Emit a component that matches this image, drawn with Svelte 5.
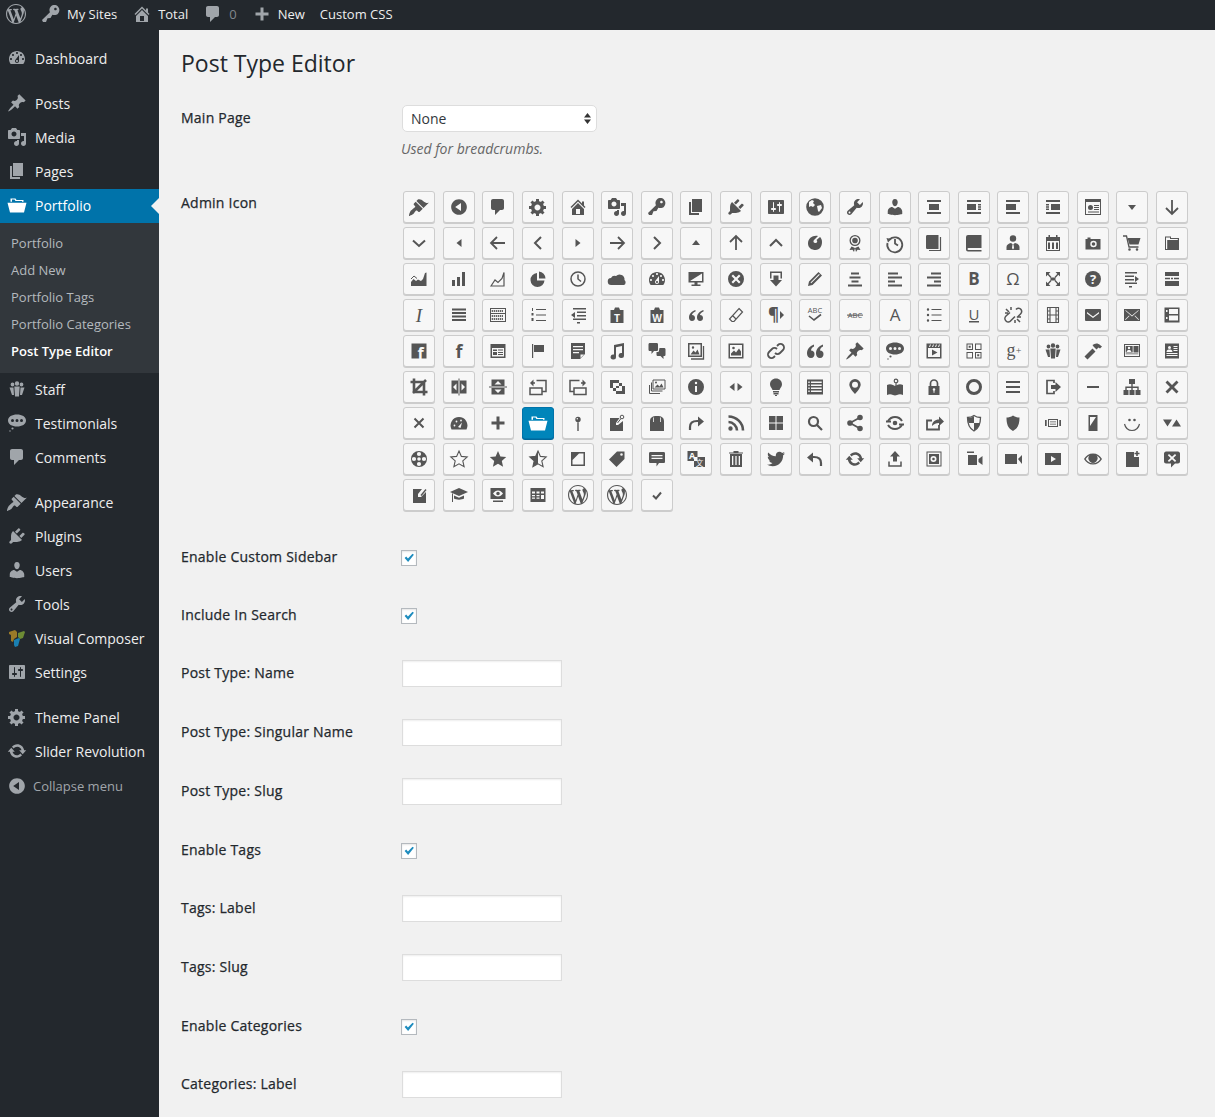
<script>
  const r = (x, y, w, h) => `M${x} ${y}h${w}v${h}h${-w}z`;
  const c = (x, y, a) => `M${x - a} ${y}a${a} ${a} 0 1 0 ${2 * a} 0a${a} ${a} 0 1 0 ${-2 * a} 0z`;
  const many = (xs, y, w, h) => xs.map((x) => r(x, y, w, h)).join("");

  const starPath = "M10 2l2.4 5.4 5.8.6-4.4 3.9 1.3 5.8L10 14.8l-5.1 2.9 1.3-5.8L1.8 8l5.8-.6z";
  const shieldPath = "M10 2.5c2 1.5 4.5 2 6.5 2 0 6-1 10.5-6.5 13.5C4.5 15 3.5 10.5 3.5 4.5c2 0 4.5-.5 6.5-2z";
  const wp = "M20 10c0-5.51-4.49-10-10-10C4.48 0 0 4.49 0 10c0 5.52 4.48 10 10 10 5.51 0 10-4.48 10-10zM7.78 15.37L4.37 6.22c.55-.02 1.17-.08 1.17-.08.5-.06.44-1.13-.06-1.11 0 0-1.45.11-2.37.11-.18 0-.37 0-.58-.01C4.12 2.69 6.87 1.11 10 1.11c2.33 0 4.45.87 6.05 2.34-.68-.11-1.65.39-1.65 1.58 0 .74.45 1.36.9 2.1.35.61.55 1.36.55 2.46 0 1.49-1.4 5-1.4 5l-3.03-8.37c.54-.02.82-.17.82-.17.5-.05.44-1.25-.06-1.22 0 0-1.44.12-2.38.12-.87 0-2.33-.12-2.33-.12-.5-.03-.56 1.2-.06 1.22l.92.08 1.26 3.41zM17.41 10c.24-.64.74-1.87.43-4.25.7 1.29 1.05 2.71 1.05 4.25 0 3.29-1.73 6.24-4.4 7.78.97-2.59 1.94-5.2 2.92-7.78zM6.1 18.09C3.12 16.65 1.11 13.53 1.11 10c0-1.3.23-2.48.72-3.59C3.25 10.3 4.67 14.2 6.1 18.09zm4.03-6.63l2.58 6.98c-.86.29-1.76.45-2.71.45-.79 0-1.57-.11-2.29-.33.81-2.38 1.62-4.74 2.42-7.1z";
  const light = "#f7f7f7";

  // f = filled (evenodd), s = stroked, w = stroke width, t = [text, x, y, size, class, fill]
  const icons = {
    brush: { f: "M14.48 11.06L7.41 3.99l1.5-1.5c.5-.56 2.3-.47 3.51.32 1.21.8 1.43 1.28 2.91 2.1 1.18.64 2.45 1.26 4.45.85zm-.71.71L6.7 4.7 4.93 6.47c-.39.39-.39 1.02 0 1.41l1.06 1.06c.39.39.39 1.03 0 1.42-.6.6-1.43 1.11-2.21 1.69-.35.26-.7.53-1.01.84C1.43 13.26 0 16.85 0 19c0 0 3.74-1.43 4.3-2.11.31-.31.58-.66.84-1.01.58-.78 1.09-1.61 1.69-2.21.39-.39 1.03-.39 1.42 0l1.06 1.06c.39.39 1.02.39 1.41 0z" },
    collapse: { f: "M10 2.16c4.33 0 7.84 3.51 7.84 7.84s-3.51 7.84-7.84 7.84S2.16 14.33 2.16 10 5.71 2.16 10 2.16zm2 11.72V6.12L6.18 9.97z" },
    comment: { f: "M5 2h9c1.1 0 2 .9 2 2v7c0 1.1-.9 2-2 2h-2l-5 5v-5H5c-1.1 0-2-.9-2-2V4c0-1.1.9-2 2-2z" },
    gear: { f: "M18 12h-2.18c-.17.7-.44 1.35-.81 1.93l1.54 1.54-2.1 2.1-1.54-1.54c-.58.36-1.23.63-1.91.79V19H8v-2.18c-.68-.16-1.33-.43-1.91-.79l-1.54 1.54-2.12-2.12 1.54-1.54c-.36-.58-.63-1.23-.79-1.91H1V9.03h2.17c.16-.7.44-1.35.8-1.94L2.43 5.55l2.1-2.1 1.54 1.54c.58-.37 1.24-.64 1.93-.81V2h3v2.18c.68.16 1.33.43 1.91.79l1.54-1.54 2.12 2.12-1.54 1.54c.36.59.64 1.24.8 1.94H18V12zm-8.5 1.5c1.66 0 3-1.34 3-3s-1.34-3-3-3-3 1.34-3 3 1.34 3 3 3z" },
    home: { f: "M16 8.5l1.53 1.53-1.06 1.06L10 4.62l-6.47 6.47-1.06-1.06L10 2.5l4 4v-2h2v4zm-6-2.46l6 5.99V18H4v-5.97zM12 17v-5H8v5h4z" },
    media: { f: "M13 11V4c0-.55-.45-1-1-1h-1.67L9 1H5L3.67 3H2c-.55 0-1 .45-1 1v7c0 .55.45 1 1 1h10c.55 0 1-.45 1-1zM7 4.5c1.38 0 2.5 1.12 2.5 2.5S8.38 9.5 7 9.5 4.5 8.38 4.5 7 5.62 4.5 7 4.5zM14 6h5v10.5c0 1.38-1.12 2.5-2.5 2.5S14 17.88 14 16.5s1.12-2.5 2.5-2.5c.17 0 .34.02.5.05V9h-3V6zm-4 8.05V13h2v3.5c0 1.38-1.12 2.5-2.5 2.5S7 17.88 7 16.5 8.12 14 9.5 14c.17 0 .34.02.5.05z" },
    key: { f: "M16.95 2.58c1.96 1.95 1.96 5.12 0 7.07-1.51 1.51-3.75 1.84-5.59 1.01l-1.87 3.31-2.99.31L5 18H2l-1-2 7.95-7.69c-.92-1.87-.62-4.18.93-5.73 1.95-1.96 5.12-1.96 7.07 0zm-2.51 3.79c.74 0 1.33-.6 1.33-1.34 0-.73-.59-1.33-1.33-1.33-.73 0-1.33.6-1.33 1.33 0 .74.6 1.34 1.33 1.34z" },
    pages: { f: "M6 15V2h10v13H6zm-1 1h8v2H3V5h2v11z" },
    plugin: { f: "M13.11 4.36L9.87 7.6 8 5.73l3.24-3.24c.35-.34 1.05-.2 1.56.32.52.51.66 1.21.31 1.55zm-8 1.77l.91-1.12 9.01 9.01-1.19.84c-.71.71-2.63 1.16-3.82 1.16H6.14L4.9 17.26c-.59.59-1.54.59-2.12 0-.59-.58-.59-1.53 0-2.12l1.24-1.24v-3.88c0-1.13.4-3.19 1.09-3.89zm7.26 3.97l3.24-3.24c.34-.35 1.04-.21 1.55.31.52.51.66 1.21.31 1.55l-3.24 3.25z" },
    settings: { f: "M18 16V4c0-.55-.45-1-1-1H3c-.55 0-1 .45-1 1v12c0 .55.45 1 1 1h14c.55 0 1-.45 1-1zM8 11h1c.55 0 1 .45 1 1s-.45 1-1 1H8v1.5c0 .28-.22.5-.5.5s-.5-.22-.5-.5V13H6c-.55 0-1-.45-1-1s.45-1 1-1h1V5.5c0-.28.22-.5.5-.5s.5.22.5.5V11zm5-2h-1c-.55 0-1-.45-1-1s.45-1 1-1h1V5.5c0-.28.22-.5.5-.5s.5.22.5.5V7h1c.55 0 1 .45 1 1s-.45 1-1 1h-1v5.5c0 .28-.22.5-.5.5s-.5-.22-.5-.5V9z" },
    globe: { f: c(10, 10, 8.8) + "M4 5l3-2 2 1-1 2 2 2-2 2-2-1-2 1zM12 9l4-1 1 3-3 4-1-1z" },
    tools: { f: "M16.68 9.77c-1.34 1.34-3.3 1.67-4.95.99l-5.41 6.52c-.99.99-2.59.99-3.58 0s-.99-2.59 0-3.57l6.52-5.42c-.68-1.65-.35-3.61.99-4.95 1.28-1.28 3.12-1.62 4.72-1.06l-2.89 2.89 2.82 2.82 2.86-2.87c.53 1.58.18 3.39-1.08 4.65zM3.81 16.21c.4.39 1.04.39 1.43 0 .4-.4.4-1.04 0-1.43-.39-.4-1.03-.4-1.43 0-.39.39-.39 1.03 0 1.43z" },
    users: { f: "M10 9.25c-2.27 0-2.73-3.44-2.73-3.44C7 4.02 7.82 2 9.97 2c2.16 0 2.98 2.02 2.71 3.81 0 0-.41 3.44-2.68 3.44zm0 2.57L12.72 10c2.39 0 4.52 2.33 4.52 4.53v2.49s-3.65 1.13-7.24 1.13c-3.65 0-7.24-1.13-7.24-1.13v-2.49c0-2.25 1.94-4.48 4.47-4.48z" },
    blockCenter: { f: r(3, 3, 14, 2) + r(5, 7, 10, 6) + r(3, 15, 14, 2) },
    blockLeftD: { f: r(3, 3, 14, 2) + r(3, 7, 9, 6) + r(14, 7, 3, 1.5) + r(14, 9.3, 3, 1.5) + r(14, 11.5, 3, 1.5) + r(3, 15, 14, 2) },
    blockLeft: { f: r(3, 3, 14, 2) + r(3, 7, 10, 6) + r(3, 15, 14, 2) },
    blockRight: { f: r(3, 3, 14, 2) + r(8, 7, 9, 6) + r(3, 7, 3, 1.5) + r(3, 9.3, 3, 1.5) + r(3, 11.5, 3, 1.5) + r(3, 15, 14, 2) },
    news: { f: r(2, 2, 16, 16) + r(3, 5, 14, 12) + c(7.5, 10.5, 2.5) + r(11, 8, 5, 1) + r(11, 10, 5, 1) + r(11, 12, 5, 1) + r(5, 14.5, 11, 1) },
    triDown: { f: "M6 8h8l-4 5z" },
    downAlt: { s: "M10 3v14M4 11l6 6 6-6" },
    chevDown: { s: "M4 7.5l6 5.5 6-5.5", w: 2 },
    triLeft: { f: "M12.5 6v8l-5-4z" },
    leftAlt: { s: "M17 10H3M9 4l-6 6 6 6" },
    chevLeft: { s: "M13 4l-6 6 6 6", w: 2 },
    triRight: { f: "M7.5 6v8l5-4z" },
    rightAlt: { s: "M3 10h14M11 4l6 6-6 6" },
    chevRight: { s: "M7 4l6 6-6 6", w: 2 },
    triUp: { f: "M6 12h8l-4-5z" },
    upAlt: { s: "M10 17V3M4 9l6-6 6 6" },
    chevUp: { s: "M4 13l6-6 6 6", w: 2 },
    art: { f: "M13 3C8 2 3 5 3 10.5 3 15 7 17 10.5 17 15 17 17 13 17 9c0-2.5-1-4-2-5l-3.5 3c1.5 1.2.5 3.5-1.5 3-2-.5-2-2.5-.5-3.5z" },
    award: { f: c(10, 7.5, 5.5) + c(10, 7.5, 4.2) + c(10, 7.5, 2.8) + "M6.5 13.5L4.5 17l3-.3L9 19l1-4 1 4 1.5-2.3 3 .3-2-3.5-3.5 1.5z" },
    backup: { f: "M1.5 5l5 1-3.5 3.5z", s: "M4.5 6.5A7.5 7.5 0 1 1 2.5 10M10 6v4.5l3 2" },
    book: { f: "M3.5 2H14.500v14H3.500c-1 0-1.500-.5-1.500-1.500v-11C2 2.500 2.500 2 3.500 2z", s: "M16.500 4v13.500H5", w: 1.2 },
    bookAlt: { f: "M4 2H17.500v13H4.500a1 1 0 0 0 0 2H17.500v1.500H4a2 2 0 0 1-2-2V4a2 2 0 0 1 2-2z" },
    businessman: { f: c(10, 5.5, 3.2) + "M3.5 17v-3c0-2 2-3.5 4.5-4l2 1.5 2-1.5c2.5.5 4.5 2 4.5 4v3zM9.5 11.5h1l.5 3.5-1 1.5-1-1.5z" },
    calendar: { f: r(3, 4, 14, 14) + r(4, 8, 12, 9) + many([5, 9, 13], 9.5, 2, 6.5) + r(5.5, 2, 1.5, 2) + r(13, 2, 1.5, 2) },
    camera: { f: "M2.500 6h2V4.500h3V6H17.500v10.500h-15z" + c(10.5, 11, 3.2) + c(10.5, 11, 1.8) },
    cart: { f: "M5.500 5h13l-2 6.500H7.500z" + c(7.5, 16.5, 1.3) + c(15, 16.5, 1.3), s: "M1 3h3.500l2.500 11h9.500", w: 1.3 },
    category: { f: "M3 3.5h6V5h8v12H3zM4 4.5V16h1.2V7h10.6V6H8V4.5z" },
    areaChart: { f: "M2 17v-4l2.5-3 2.5 2 2-1.5 3 1.5 2-2 2-6 1.5-.5V17z", s: "M2 10l3-3 3 2.500", w: 1 },
    barChart: { f: r(3, 11, 3, 6) + r(8, 8, 3, 9) + r(13, 3, 3, 14) },
    lineChart: { s: "M3 17L7 11l3 2.5 4-4 2-6V17z", w: 1.2 },
    pie: { f: "M9 4a7 7 0 1 0 7.5 7.5H9zM11 2.5a7 7 0 0 1 6.5 7H11z" },
    clock: { s: c(10, 10, 7) + "M10 5.5V10l3 2.5", w: 1.5 },
    cloud: { f: "M4.5 16A3.5 3.5 0 0 1 4 9a4 4 0 0 1 5-2 5 5 0 0 1 8.5 4 3 3 0 0 1-.5 5z" },
    dashboard: { f: "M3.76 16h12.48c1.1-1.37 1.76-3.11 1.76-5 0-4.42-3.58-8-8-8s-8 3.58-8 8c0 1.89.66 3.63 1.76 5zM10 4c.55 0 1 .45 1 1s-.45 1-1 1-1-.45-1-1 .45-1 1-1zM6 6c.55 0 1 .45 1 1s-.45 1-1 1-1-.45-1-1 .45-1 1-1zm8 0c.55 0 1 .45 1 1s-.45 1-1 1-1-.45-1-1 .45-1 1-1zm-5.37 5.55L12 7v6c0 1.1-.9 2-2 2s-2-.9-2-2c0-.57.24-1.08.63-1.45zM4 10c.55 0 1 .45 1 1s-.45 1-1 1-1-.45-1-1 .45-1 1-1zm12 0c.55 0 1 .45 1 1s-.45 1-1 1-1-.45-1-1 .45-1 1-1zm-5 3c0-.55-.45-1-1-1s-1 .45-1 1 .45 1 1 1 1-.45 1-1z" },
    desktop: { f: r(2.5, 3, 15, 10.5) + r(4, 4.5, 12, 7.5) + "M4 12L16 4.5H4z" + r(8.5, 13.5, 3, 2) + r(5.5, 15.5, 9, 1.5) },
    dismiss: { f: c(10, 10, 8) + "M7 5.5l3 3 3-3L14.5 7l-3 3 3 3-1.5 1.5-3-3-3 3L5.5 13l3-3-3-3z" },
    download: { f: "M4 2.5h12v7h-1.5V4h-9v5.5H4zM7.5 6.5h5V11H16l-6 6.5L4 11h3.5z" },
    pencil: { f: "M13.5 3L17 6.5 7.5 16 3 17l1-4.5zM14 5l-8.5 8.5.7.7L14.8 5.8z" },
    textCenter: { f: r(6, 3.5, 8, 2) + r(4.5, 7.5, 11, 2) + r(6.5, 11.5, 7, 2) + r(3, 15.5, 14, 2) },
    textLeft: { f: r(3, 3.5, 10, 2) + r(3, 7.5, 14, 2) + r(3, 11.5, 7, 2) + r(3, 15.5, 14, 2) },
    textRight: { f: r(7, 3.5, 10, 2) + r(3, 7.5, 14, 2) + r(10, 11.5, 7, 2) + r(3, 15.5, 14, 2) },
    bold: { t: [["B", 10, 16, 17, "sb"]] },
    omega: { t: [["Ω", 10, 16, 17, "sn"]] },
    expand: { f: "M3 3h4.5L3 7.5zM17 3h-4.5L17 7.5zM3 17h4.5L3 12.5zM17 17h-4.5L17 12.5z" + r(7.5, 8.5, 5, 3), s: "M4 4l4 4.5M16 4l-4 4.5M4 16l4-4.5M16 16l-4-4.5", w: 1.3 },
    help: { f: c(10, 10, 8), t: [["?", 10, 14.5, 13, "sb", light]] },
    indent: { f: r(3, 3, 12, 1.5) + r(3, 6.5, 9, 1.5) + r(3, 10, 9, 1.5) + r(3, 13.5, 12, 1.5) + r(7, 17, 3, 1.5) + "M13 7v6l4-3z" },
    insertMore: { f: r(3, 3, 14, 4) + r(3, 8.8, 5, 1.5) + r(9, 8.8, 2, 1.5) + r(12, 8.8, 5, 1.5) + r(3, 12, 14, 5) },
    italic: { t: [["I", 10, 16.5, 19, "si"]] },
    justify: { f: r(3, 3.5, 14, 2) + r(3, 7, 14, 2) + r(3, 10.5, 14, 2) + r(3, 14, 14, 2) },
    kitchen: { f: r(2, 3, 16, 14) + r(3, 4, 14, 4) + r(3, 9, 14, 7) + many([3.7, 5.7, 7.7, 9.7, 11.7, 13.7], 5, 1.2, 2) + many([3.7, 5.7, 7.7, 9.7, 11.7, 13.7], 10, 1.2, 2) + many([3.7, 5.7, 7.7, 9.7, 11.7, 13.7], 13, 1.2, 2) },
    ol: { f: r(4, 3, 1, 3) + r(3.5, 8, 2, 2.5) + r(3.5, 13, 2, 3) + r(8, 4, 10, 1) + r(8, 9.5, 10, 1) + r(8, 15, 10, 1) },
    outdent: { f: r(5, 3, 13, 1.5) + r(9, 6.5, 9, 1.5) + r(9, 10, 9, 1.5) + r(5, 13.5, 13, 1.5) + r(9, 17, 3, 1.5) + "M7 7v6l-4-3z" },
    pasteText: { f: "M3.5 5H7l1-2.5h4L13 5h3.5v13h-13z", t: [["T", 10, 16.5, 10.5, "sb", light]] },
    pasteWord: { f: "M3.5 5H7l1-2.5h4L13 5h3.5v13h-13z", t: [["W", 10, 16.5, 10, "sb", light]] },
    quote: { f: "M9.5 5C5.5 6.5 3 9 3 12.5 3 14.800 4.200 16 6 16s3-1.300 3-3-1.200-3-3-3c0-1 1.200-2.500 3.500-3.500zM17.500 5c-4 1.500-6.500 4-6.500 7.500 0 2.300 1.200 3.500 3 3.500s3-1.300 3-3-1.200-3-3-3c0-1 1.200-2.500 3.500-3.500z" },
    eraser: { s: "M13 3.5L16.5 7 8 16.5H6L3.5 14zM6.5 10.5l4 4", w: 1.2 },
    rtl: { f: "M14 6v8l4-4z", t: [["¶", 7.5, 16, 17, "sb"]] },
    spell: { s: "M4 11l5 4 7-5.5", w: 1.6, t: [["ABC", 10, 7.5, 7.5, "sn"]] },
    strike: { f: r(2, 9.6, 16, 1), t: [["ABC", 10, 12.8, 7.5, "sn"]] },
    textColor: { t: [["A", 10, 16, 17, "sn"]] },
    ul: { f: c(4, 4.5, 1.2) + c(4, 10, 1.2) + c(4, 15.5, 1.2) + r(7.5, 4, 10, 1) + r(7.5, 9.5, 10, 1) + r(7.5, 15, 10, 1) },
    underline: { f: r(5, 16, 10, 1.5), t: [["U", 10, 14.5, 15, "sn"]] },
    unlink: { s: "M13 4.5c1.5-2 4-1.5 5 0s1 3-.5 4.5L14 12.5M7 7.5L3 11c-1.5 1.5-1.5 3.5 0 5s3.5 1.5 5-.5l4-4M3 4l3 3M8 2v3M2 8h3M14 14l3 3M12 15v3M15 12h3", w: 1.5 },
    film: { s: r(4.5, 2.5, 11, 15) + "M7 2.5v15M13 2.5v15M7 10h6M4.5 6H7M4.5 10H7M4.5 14H7M13 6h2.5M13 10h2.5M13 14h2.5", w: 1.1 },
    email: { f: "M3 4h14a1 1 0 0 1 1 1v10a1 1 0 0 1-1 1H3a1 1 0 0 1-1-1V5a1 1 0 0 1 1-1zM4 7l6 4.5L16 7v1.5L10 13 4 8.5z" },
    emailAlt: { f: r(2, 4, 16, 12) + "M3.5 5l6.5 5.5L16.5 5v.8L10 11.5 3.5 5.8zM3 14.5l4-4 .5.5-4 4zM17 14.5l-4-4-.5.5 4 4z" },
    excerpt: { f: r(2.5, 2.5, 15, 15) + r(7, 4, 9, 5) + r(7, 10.5, 9, 5) + r(4, 5, 1.5, 2) + r(4, 12, 1.5, 2) },
    facebook: { f: r(2.5, 2.5, 15, 15), t: [["f", 11.5, 17.5, 16, "sb", light]] },
    facebookAlt: { t: [["f", 10, 16.5, 18, "sb"]] },
    feedback: { f: r(2.5, 3, 15, 14) + r(4, 7, 12, 8.5) + r(5, 8.5, 4, 1.5) + r(5, 11, 4, 3) + r(10, 8.5, 5, 1) + r(10, 11, 5, 1) + r(10, 13, 5, 1) },
    flag: { f: r(4, 3, 1.2, 14) + "M6 4h10v7H6z" },
    aside: { f: "M3 2h14v11l-5 5H3z" + r(5, 5, 10, 1.2) + r(5, 8, 10, 1.2) + r(5, 11, 6, 1.2) + "M12.5 17v-3.5H16z" },
    audio: { f: "M7 4l10-2v12.5a2.7 2.5 0 1 1-2-2.4V5L9 6.3V16a2.7 2.5 0 1 1-2-2.4z" },
    chat: { f: "M3 2h6.500c1 0 1.500.5 1.500 1.500v5c0 1-.5 1.500-1.500 1.500H7l-2.500 3v-3H3c-1 0-1.500-.5-1.500-1.500v-5C1.500 2.500 2 2 3 2zM12.500 7h4.500c1 0 1.500.5 1.500 1.500v5c0 1-.5 1.500-1.500 1.500h-.5v3l-3-3h-2.500c-1 0-1.500-.5-1.500-1.500V11h.5c1.500 0 2-.5 2-1.500z" },
    gallery: { f: r(2, 2, 14, 14) + r(3.5, 3.5, 11, 11) + "M4.5 13.5l3-4 2 2 2-3 2 5z" + c(7, 6.5, 1.2), s: "M17.5 5v13H5", w: 1.3 },
    image: { f: r(2.5, 2.5, 15, 15) + r(4, 4, 12, 12) + "M5 14.5v-2l3-3 2 2 3-4 2 3v4z" + c(7.5, 7, 1.3) },
    link: { s: "M11 5l1-1a3.5 3.5 0 0 1 5 5l-3 3a3.5 3.5 0 0 1-5 0M9 15l-1 1a3.5 3.5 0 0 1-5-5l3-3a3.5 3.5 0 0 1 5 0", w: 1.8 },
    quoteBig: { f: "M9 3.5C4.5 5 2 8.5 2 12.5 2 15 3.5 17 6 17s3.5-2 3.5-4S8 9.5 6 9.5c0-1.5 1-3 3-4zM18 3.5c-4.5 1.5-7 5-7 9 0 2.5 1.5 4.5 4 4.5s3.5-2 3.5-4-1.5-3.5-3.5-3.5c0-1.5 1-3 3-4z" },
    pin: { f: "M10.44 3.02l1.82-1.82 6.36 6.35-1.83 1.82c-1.05-.68-2.48-.57-3.41.36l-.75.75c-.92.93-1.04 2.35-.35 3.41l-1.83 1.82-2.41-2.41-2.8 2.79c-.42.42-3.38 2.71-3.8 2.29s1.86-3.39 2.28-3.81l2.79-2.79L4.1 9.36l1.83-1.82c1.05.69 2.48.57 3.41-.36l.75-.75c.93-.92 1.04-2.35.35-3.41z" },
    status: { f: "M10 1.500c5 0 9 2.300 9 6s-4 6-9 6-9-2.300-9-6 4-6 9-6z" + c(5.5, 7.5, 1.5) + c(10, 7.5, 1.5) + c(14.5, 7.5, 1.5) + c(5.5, 15.5, 1.1) + c(3, 18, 0.7) },
    video: { f: r(2.5, 2.5, 15, 15) + r(4, 7, 12, 9) + "M8 8.5v6l5.5-3zM6 3.5h1L6 6H5zM9 3.5h1L9 6H8zM12 3.5h1l-1 2.5h-1zM15 3.5h1l-1 2.5h-1z" },
    gridView: { f: r(2.5, 2.5, 6.5, 6.5) + r(3.5, 3.5, 4.5, 4.5) + r(4.7, 4.7, 2, 2) + r(11, 2.5, 6.5, 6.5) + r(12, 3.5, 4.5, 4.5) + r(2.5, 11, 6.5, 6.5) + r(3.5, 12, 4.5, 4.5) + r(11, 11, 6.5, 6.5) + r(12, 12, 4.5, 4.5) + r(13.2, 13.2, 2, 2) },
    gplus: { t: [["g", 8, 14.5, 18, "sr"], ["+", 15.5, 13, 10, "sr"]] },
    groups: { f: c(5.5, 5.5, 1.9) + c(10, 4.5, 2.2) + c(14.5, 5.5, 1.9) + "M2.500 8.500h4L7 16H5zM13.500 8.500h4L15 16h-2zM7.300 7.500h5.400L12 17.500H8z" },
    hammer: { f: "M9.500 4C12 2 15 2 17 4l2 1.500-2 2-1.500-1-2 2-3-3zM9.500 7.500l3 3-8 8-3-3z" },
    idCard: { f: r(2, 3, 16, 13) + r(3, 4, 14, 11) + r(3.7, 5, 7, 6.5) + c(7, 7, 1.2) + "M4.7 11c0-1.5 1-2 2.3-2s2.3.5 2.3 2z" + r(11.5, 5, 5, 6.5) + r(3.7, 12.5, 12.6, 0.8) },
    idAlt: { f: r(3, 2.5, 14, 15) + c(7.5, 6.5, 1.5) + "M4.5 11c0-2 1.5-2.5 3-2.5s3 .5 3 2.5z" + r(11.5, 5, 4, 1) + r(11.5, 7, 4, 1) + r(11.5, 9, 4, 1) + r(4.5, 12, 11, 1) + r(4.5, 14, 11, 1) },
    crop: { s: "M5 1.5V15h13.5M1.5 5H15v13.5M17 3L4 16", w: 2.6 },
    flipH: { f: r(2.5, 3.5, 6.5, 13) + r(11, 3.5, 6.5, 13) + r(9.5, 1.5, 1, 17) + "M7.500 6.500v7L4 10zM12.500 6.500v7L16 10z" },
    flipV: { f: r(3.5, 2.5, 13, 6.5) + r(3.5, 11, 13, 6.5) + r(1, 9.5, 18, 1) + "M6.500 7.500h7L10 4zM6.500 12.500h7L10 16z" },
    rotLeft: { f: "M2 6l3.500-3.500v7z", s: "M8.500 3.500H18v11h-4M2 11h12v6.500H2zM5 6h2", w: 1.5 },
    rotRight: { f: "M18 6l-3.500-3.500v7z", s: "M11.500 3.500H2v11h4M6 11h12v6.500H6zM15 6h-2", w: 1.5 },
    imagesAlt: { f: r(3, 3, 9, 8) + r(6, 6, 9, 8) + r(9, 9, 9, 8) },
    imagesAlt2: { f: "M7.5 10.5l3-3 2 2 2-3 2 4z" + c(9, 5.5, 1), s: r(6, 3, 12, 9) + "M4.5 5.5V14h11M2.5 8v8.5H13", w: 1 },
    info: { f: c(10, 10, 8) + r(9, 9, 2, 6) + c(10, 6, 1.2) },
    leftRight: { f: "M8.5 6v8l-5-4zM11.5 6v8l5-4z" },
    bulb: { f: "M10 1.500c3.500 0 6 2.700 6 5.800 0 2.700-1.800 3.700-2.500 5.700h-7C5.800 11 4 10 4 7.300 4 4.200 6.500 1.500 10 1.500z" + r(7, 14, 6, 1.5) + r(7.5, 16, 5, 1.5) + r(9, 18, 2, 1) },
    listView: { f: r(2, 2.5, 16, 15) + [4.5, 7.5, 10.5, 13.5].map((y) => r(3.3, y, 1.4, 1.4) + r(6, y, 10.7, 1.4)).join("") },
    location: { f: "M10 2a5.7 5.7 0 0 1 5.7 5.7C15.7 11 10 17 10 17S4.3 11 4.3 7.7A5.7 5.7 0 0 1 10 2z" + c(10, 7.7, 3) },
    locationAlt: { f: "M2 8c2-1 4-1 6 0l2 1 2-1c2-1 4-1 6 0v10c-2-1-4-1-6 0l-2 .5-2-.5c-2-1-4-1-6 0z", s: c(11, 4, 1.8) + "M11 6v5", w: 1.2 },
    lock: { f: "M4.5 9h11v9h-11z" + c(10, 12.5, 1.3) + r(9.5, 13.8, 1, 2), s: "M6.5 9V6.5a3.5 3.5 0 0 1 7 0V9", w: 1.7 },
    marker: { f: c(10, 10, 8) + c(10, 10, 5) },
    menu: { f: r(3, 4, 14, 2) + r(3, 9, 14, 2) + r(3, 14, 14, 2) },
    migrate: { f: "M8 8h4.5V5l5.5 5-5.5 5v-3H8z", s: "M11 6V3.5H4v13h7V14", w: 1.7 },
    minus: { f: r(4, 9, 12, 2) },
    network: { f: r(7, 2, 6, 5) + r(9.3, 7, 1.4, 2.5) + r(3.3, 9.5, 13.4, 1.4) + r(3.3, 10.9, 1.4, 2) + r(9.3, 10.9, 1.4, 2) + r(15.3, 10.9, 1.4, 2) + r(1.5, 13, 5, 5) + r(7.5, 13, 5, 5) + r(13.5, 13, 5, 5) },
    no: { f: "M5.5 3.5L10 8l4.5-4.5 2 2L12 10l4.5 4.5-2 2L10 12l-4.5 4.5-2-2L8 10 3.5 5.5z" },
    noAlt: { s: "M5.5 5.5l9 9M14.5 5.5l-9 9", w: 2 },
    gauge: { f: "M2.5 16.5a8.5 8.5 0 1 1 15 0z" + c(5.5, 12.5, 0.9) + c(7.5, 8.5, 0.9) + c(12, 7.5, 0.9) + "M9 14l4-4.5-1.5 5.5z" },
    plus: { f: "M8.5 3.5h3v5h5v3h-5v5h-3v-5h-5v-3h5z" },
    folderOpen: { f: "M3.500 6.800V3.500h5l1 1.500h7v1.800H15V6H8.500l-1-1.500H5v2.300zM.5 7.800h19L17 17.500H3z" },
    postStatus: { f: c(10, 6.5, 2.7) + c(9.3, 5.8, 0.8) + r(9.3, 9, 1.4, 9) },
    press: { f: "M3 5h9.5L9 10v2h2l5-4v10H3z", s: c(15, 4, 1.8) + "M14 5.5L10.5 10", w: 1 },
    bag: { f: "M3 18V8c0-3 2-5 7-5s7 2 7 5v10z" + r(6, 4.5, 0.8, 4.5) + r(13.2, 4.5, 0.8, 4.5) },
    redo: { f: "M12 3.5l6 5-6 5z", s: "M4 17v-3c0-4 3-6 7-6h3", w: 2.2 },
    rss: { f: c(4.5, 15.5, 2.2), s: "M2.5 9c4.5 0 8.5 4 8.5 8.5M2.5 3.5c8 0 14.5 6.5 14.5 14", w: 2.6 },
    screen: { f: r(3, 3, 6.5, 6.5) + r(10.5, 3, 6.5, 6.5) + r(3, 10.5, 6.5, 6.5) + r(10.5, 10.5, 6.5, 6.5) },
    search: { s: c(8.5, 8.5, 4.5) + "M12 12l5 5", w: 2.2 },
    share: { f: c(15, 4.5, 2.8) + c(15, 15.5, 2.8) + c(5, 10, 2.8), s: "M15 4.5L5 10l10 5.5" },
    shareAlt: { f: c(10, 10, 2.3) + r(1, 7.5, 5, 2) + r(14, 10.5, 5, 2), s: "M3 8c2-3 4-4 7-4 3.5 0 5.5 1.5 7 4M17 12c-2 3-4 4-7 4-3.5 0-5.5-1.5-7-4", w: 2 },
    shareBox: { f: "M8 13c0-4 3-6.5 7-6.5v-3l5 5-5 4.5v-3c-3 0-5 1-7 3z", s: "M15 12v4.5H3v-9h5" },
    shield: { f: "M10 3v7H4.5c-.3-1.5-.6-3-.6-5 2.2 0 4.2-.5 6.1-2zM10 10h6c-.7 3.3-2.5 5.8-6 7.5z", s: shieldPath, w: 1.3 },
    shieldAlt: { f: shieldPath },
    slides: { f: r(2, 7, 1.7, 6) + r(16.3, 7, 1.7, 6) + r(5, 6, 10, 8) + r(6, 7, 8, 6) + r(7, 8.5, 6, 0.8) + r(7, 10.7, 6, 0.8) },
    phone: { f: r(5.5, 2, 9, 16) + "M7 4h6L7 13z" },
    smiley: { f: c(7.5, 7, 1.3) + c(12.5, 7, 1.3), s: "M2.500 11c1 4 4 6.500 7.500 6.500s6.500-2.500 7.500-6.500", w: 1.2 },
    sort: { f: "M1 6.500h9l-4.500 7zM10 13.500h9l-4.500-7z" },
    sos: { f: c(10, 10, 8) + c(10, 10, 1.8) + c(10, 5, 2.1) + c(10, 15, 2.1) + c(5, 10, 2.1) + c(15, 10, 2.1) },
    starEmpty: { s: starPath, w: 1.1 },
    star: { f: starPath },
    starHalf: { f: "M10 2v12.8l-5.1 2.9 1.3-5.8L1.8 8l5.8-.6z", s: starPath, w: 1.1 },
    sticky: { f: r(3, 3, 14, 14) + r(4.5, 4.5, 11, 11) + "M4.5 11V4.5H11z" },
    tag: { f: "M10 2.5h7.5V10l-8 8L2 10.5z" + c(14.5, 5.5, 1.3) },
    testimonial: { f: "M3.5 3h13c1 0 1.5.5 1.5 1.5v8c0 1-.5 1.5-1.5 1.5H12l-2.5 3.5V14h-6C2.5 14 2 13.5 2 12.5v-8C2 3.5 2.5 3 3.5 3z" + r(4.5, 6, 11, 1.2) + r(4.5, 8.7, 11, 1.2) },
    translate: { f: r(1.5, 2, 10, 10) + r(8, 8, 11, 10), t: [["A", 6, 10, 9, "sb", light], ["文", 13.5, 16.5, 7.5, "cjk", light]] },
    trash: { f: r(4, 5, 12, 13) + r(6, 7, 1.3, 9) + r(9.35, 7, 1.3, 9) + r(12.7, 7, 1.3, 9) + r(3, 3.5, 14, 1) + r(7.5, 2, 5, 1.5) },
    twitter: { f: "M18.94 4.46c-.49.73-1.11 1.38-1.83 1.9.01.15.01.31.01.47 0 4.85-3.69 10.44-10.43 10.44-2.07 0-4-.61-5.63-1.65.29.03.58.05.88.05 1.72 0 3.3-.59 4.55-1.57-1.6-.03-2.95-1.09-3.42-2.55.22.04.45.07.69.07.33 0 .66-.05.96-.13-1.67-.34-2.94-1.82-2.94-3.6v-.04c.5.27 1.06.44 1.66.46-.98-.66-1.63-1.78-1.63-3.06 0-.67.18-1.3.5-1.84 1.81 2.22 4.51 3.68 7.56 3.83-.06-.27-.1-.55-.1-.84 0-2.02 1.65-3.66 3.67-3.66 1.06 0 2.01.44 2.68 1.16.83-.17 1.62-.47 2.33-.89-.28.85-.86 1.57-1.62 2.02.75-.08 1.45-.28 2.11-.57z" },
    undo: { f: "M8 3.5l-6 5 6 5z", s: "M16 17v-3c0-4-3-6-7-6H6", w: 2.2 },
    update: { f: "M10.2 3.28c3.53 0 6.43 2.61 6.92 6h2.08l-3.5 4-3.5-4h2.32c-.45-1.97-2.21-3.45-4.32-3.45-1.45 0-2.73.71-3.54 1.78L4.95 5.66C6.23 4.2 8.11 3.28 10.2 3.28zm-.4 13.44c-3.52 0-6.43-2.61-6.92-6H.8l3.5-4c1.17 1.33 2.33 2.67 3.5 4H5.48c.45 1.97 2.21 3.45 4.32 3.45 1.45 0 2.73-.71 3.54-1.78l1.71 1.95c-1.28 1.46-3.15 2.38-5.25 2.38z" },
    upload: { f: "M10 2l5 5.5h-3v5H8v-5H5z", s: "M4 12.5V17h12v-4.5", w: 1.5 },
    vault: { f: r(2.5, 2.5, 15, 15) + r(3.5, 3.5, 13, 13) + r(5, 5, 10, 10) + c(9.5, 10, 3) + c(9.5, 10, 1.3) },
    videoAlt: { f: r(3, 2.5, 7, 1.5) + r(4, 6, 9, 10) + "M14.5 10l4-3v9l-4-3z" },
    videoAlt2: { f: r(2, 5, 12, 10) + "M15 10l4-4v9z" },
    videoAlt3: { f: r(2, 4, 16, 12) + "M8 7v6l5-3z" },
    eye: { f: "M1 10c2-3.5 5-5.5 9-5.5s7 2 9 5.5c-2 3.5-5 5.5-9 5.5s-7-2-9-5.5zM2.7 10c1.5 2.5 4 4.2 7.3 4.2s5.8-1.7 7.3-4.2c-1-1.5-2.2-2.6-3.7-3.4a4.5 4.5 0 1 1-7.2 0C4.9 7.4 3.7 8.5 2.7 10z" },
    addPage: { f: "M4 3h8v5h5v10H4z", s: "M15 2v5M12.5 4.5h5", w: 1.6 },
    commentX: { f: "M4 2.5h12c1 0 2 1 2 2v8c0 1-1 2-2 2h-3l-4 4v-4H4c-1 0-2-1-2-2v-8c0-1 1-2 2-2zM7 5l3 2.7L13 5l1.2 1.2L11.3 9l2.9 2.8L13 13l-3-2.8L7 13l-1.2-1.2L8.7 9 5.8 6.2z" },
    write: { f: "M4 4h9L9 9v3h3l5-5v11H4z", s: "M12 10.5l5-6", w: 1.4 },
    learn: { f: "M10 3l9 4-9 4-9-4zM5 10.5v3c2 1.5 8 1.5 10 0v-3l-5 2.2z" + r(3, 8.5, 1, 8.5) },
    viewSite: { f: r(2.5, 3, 15, 11) + "M5 8.5c1.5-2 3-3 5-3s3.5 1 5 3c-1.5 2-3 3-5 3s-3.5-1-5-3z" + c(10, 8.5, 1.8) + r(5, 15.5, 10, 1.5) },
    widgets: { f: r(2.5, 3, 15, 14) + many([4, 8.5, 13], 6.5, 3, 2) + many([4, 8.5], 10, 3, 1.2) + many([4, 8.5], 12.5, 3, 1.2) + r(13, 10, 3, 4) },
    wp: { f: wp },
    yes: { s: "M6 10.5l3 3 5-6", w: 2 }
  };

  const iconRows = [
    "brush collapse comment gear home media key pages plugin settings globe tools users blockCenter blockLeftD blockLeft blockRight news triDown downAlt",
    "chevDown triLeft leftAlt chevLeft triRight rightAlt chevRight triUp upAlt chevUp art award backup book bookAlt businessman calendar camera cart category",
    "areaChart barChart lineChart pie clock cloud dashboard desktop dismiss download pencil textCenter textLeft textRight bold omega expand help indent insertMore",
    "italic justify kitchen ol outdent pasteText pasteWord quote eraser rtl spell strike textColor ul underline unlink film email emailAlt excerpt",
    "facebook facebookAlt feedback flag aside audio chat gallery image link quoteBig pin status video gridView gplus groups hammer idCard idAlt",
    "crop flipH flipV rotLeft rotRight imagesAlt imagesAlt2 info leftRight bulb listView location locationAlt lock marker menu migrate minus network no",
    "noAlt gauge plus folderOpen postStatus press bag redo rss screen search share shareAlt shareBox shield shieldAlt slides phone smiley sort",
    "sos starEmpty star starHalf sticky tag testimonial translate trash twitter undo update upload vault videoAlt videoAlt2 videoAlt3 eye addPage commentX",
    "write learn viewSite widgets wp wp yes"
  ];
  const tiles = iconRows.join(" ").split(" ");

  const menuTop = [{ icon: "dashboard", label: "Dashboard" }];
  const menuContent = [
    { icon: "pin", label: "Posts" },
    { icon: "media", label: "Media" },
    { icon: "pages", label: "Pages" }
  ];
  const subItems = ["Portfolio", "Add New", "Portfolio Tags", "Portfolio Categories"];
  const menuCustom = [
    { icon: "groups", label: "Staff" },
    { icon: "status", label: "Testimonials" },
    { icon: "comment", label: "Comments" }
  ];
  const menuAdmin = [
    { icon: "brush", label: "Appearance" },
    { icon: "plugin", label: "Plugins" },
    { icon: "users", label: "Users" },
    { icon: "tools", label: "Tools" },
    { icon: "vc", label: "Visual Composer" },
    { icon: "settings", label: "Settings" }
  ];
  const menuExtra = [
    { icon: "gear", label: "Theme Panel" },
    { icon: "update", label: "Slider Revolution" }
  ];

  const fields = [
    { label: "Enable Custom Sidebar", type: "check" },
    { label: "Include In Search", type: "check" },
    { label: "Post Type: Name", type: "text" },
    { label: "Post Type: Singular Name", type: "text" },
    { label: "Post Type: Slug", type: "text" },
    { label: "Enable Tags", type: "check" },
    { label: "Tags: Label", type: "text" },
    { label: "Tags: Slug", type: "text" },
    { label: "Enable Categories", type: "check" },
    { label: "Categories: Label", type: "text" }
  ];
</script>

{#snippet icon(name)}
  {@const ic = icons[name]}
  <svg class="ic" viewBox="0 0 20 20" aria-hidden="true">
    {#if ic.f}<path class="solid" d={ic.f} />{/if}
    {#if ic.s}<path class="line" d={ic.s} stroke-width={ic.w ?? 1.8} />{/if}
    {#each ic.t ?? [] as [str, x, y, size, cls, fill]}
      <text {x} {y} font-size={size} class={cls} fill={fill ?? "currentColor"} text-anchor="middle">{str}</text>
    {/each}
  </svg>
{/snippet}

{#snippet menuItem(item)}
  <li class="item">
    {#if item.icon === "vc"}
      <svg class="ic" viewBox="0 0 20 20" aria-hidden="true">
        <path fill="#9a7a28" d="M2 4l6-2 2 2v5l-3 2-1 3-2-1V7L2 6z" />
        <path fill="#6d8b34" d="M11 5l6-2 1 1-2 6-3 1-2-2z" />
        <path fill="#1a7fb0" d="M7 12l5-2 1 1-2 7-3 1-1-2z" />
      </svg>
    {:else}
      {@render icon(item.icon)}
    {/if}
    <span>{item.label}</span>
  </li>
{/snippet}

<div class="page">
  <header class="toolbar">
    <span class="bar-icon">{@render icon("wp")}</span>
    <span class="bar-item"><span class="bar-icon">{@render icon("key")}</span>My Sites</span>
    <span class="bar-item"><span class="bar-icon">{@render icon("home")}</span>Total</span>
    <span class="bar-item muted"><span class="bar-icon">{@render icon("comment")}</span>0</span>
    <span class="bar-item"><span class="bar-icon">{@render icon("plus")}</span>New</span>
    <span class="bar-item">Custom CSS</span>
  </header>

  <div class="body">
    <nav class="sidebar">
      <ul class="group first">
        {#each menuTop as item}{@render menuItem(item)}{/each}
      </ul>
      <ul class="group">
        {#each menuContent as item}{@render menuItem(item)}{/each}
        <li class="item current">
          {@render icon("folderOpen")}
          <span>Portfolio</span>
        </li>
      </ul>
      <ul class="sub">
        {#each subItems as sub}
          <li>{sub}</li>
        {/each}
        <li class="sub-current">Post Type Editor</li>
      </ul>
      <ul class="group flush">
        {#each menuCustom as item}{@render menuItem(item)}{/each}
      </ul>
      <ul class="group">
        {#each menuAdmin as item}{@render menuItem(item)}{/each}
      </ul>
      <ul class="group">
        {#each menuExtra as item}{@render menuItem(item)}{/each}
        <li class="item collapse">
          {@render icon("collapse")}
          <span>Collapse menu</span>
        </li>
      </ul>
    </nav>

    <main class="content">
      <h1>Post Type Editor</h1>
      <table class="form-table">
        <tbody>
          <tr>
            <th>Main Page</th>
            <td>
              <div class="select-wrap">
                <select>
                  <option>None</option>
                </select>
                <svg class="updown" viewBox="0 0 7 11" aria-hidden="true">
                  <path d="M3.5 0L7 4.5H0zM3.5 11L0 6.500h7z" />
                </svg>
              </div>
              <p class="description">Used for breadcrumbs.</p>
            </td>
          </tr>
          <tr>
            <th>Admin Icon</th>
            <td>
              <div class="icon-grid">
                {#each tiles as name, i}
                  <span class="tile" class:active={i === 123}>{@render icon(name)}</span>
                {/each}
              </div>
            </td>
          </tr>
          {#each fields as field}
            <tr>
              <th>{field.label}</th>
              <td>
                {#if field.type === "check"}
                  <span class="check">
                    <svg viewBox="0 0 16 16" aria-hidden="true">
                      <path d="M3 8l1.800-1.600 2 2.200L12 3l1.600 1.300L7 12.500z" />
                    </svg>
                  </span>
                {:else}
                  <input type="text" />
                {/if}
              </td>
            </tr>
          {/each}
        </tbody>
      </table>
    </main>
  </div>
</div>

<style>
  :global(body) {
    background: #f1f1f1;
    font-family: "Open Sans", "Liberation Sans", sans-serif;
    color: #23282d;
  }

  .page {
    height: 1117px;
    overflow: hidden;
  }

  ul {
    list-style: none;
    margin: 0;
    padding: 0;
  }

  .ic {
    display: block;
    width: 20px;
    height: 20px;
    flex: none;
    overflow: visible;
  }

  .solid {
    fill: currentColor;
    fill-rule: evenodd;
  }

  .line {
    fill: none;
    stroke: currentColor;
  }

  .sb {
    font-family: "Open Sans", sans-serif;
    font-weight: 700;
  }

  .sn {
    font-family: "Open Sans", sans-serif;
  }

  .sr {
    font-family: "Liberation Serif", serif;
  }

  .si {
    font-family: "Liberation Serif", serif;
    font-style: italic;
  }

  .cjk {
    font-family: "Noto Sans CJK SC", sans-serif;
  }

  .toolbar {
    height: 30px;
    box-sizing: border-box;
    padding: 0 0 2px 6px;
    background: #23282d;
    color: #eee;
    font-size: 13px;
    display: flex;
    align-items: center;
    gap: 15px;
  }

  .bar-item {
    display: flex;
    align-items: center;
    gap: 6px;
  }

  .bar-item.muted {
    color: #82878c;
  }

  .bar-icon {
    color: #a0a5aa;
  }

  .body {
    display: flex;
    align-items: stretch;
    height: 1087px;
  }

  .sidebar {
    width: 159px;
    flex: none;
    background: #23282d;
    color: #eee;
    font-size: 14px;
  }

  .group {
    margin-top: 11px;
  }

  .group.first {
    margin-top: 12px;
  }

  .group.flush {
    margin-top: 0;
  }

  .item {
    height: 34px;
    box-sizing: border-box;
    padding: 0 0 2px 7px;
    display: flex;
    align-items: center;
    gap: 8px;
    position: relative;
    color: #eee;
  }

  .item .ic {
    color: #a0a5aa;
  }

  .item.current {
    background: #0073aa;
    color: #fff;
  }

  .item.current .ic {
    color: #fff;
  }

  .item.current::after {
    content: "";
    position: absolute;
    right: 0;
    top: 50%;
    margin-top: -8px;
    border: 8px solid transparent;
    border-right-color: #f1f1f1;
    border-left-width: 0;
  }

  .item.collapse {
    color: #a0a5aa;
    font-size: 13px;
    gap: 6px;
    padding-bottom: 0;
  }

  .sub {
    background: #32373c;
    padding: 7px 0 8px 11px;
    font-size: 13px;
    color: #b4b9be;
  }

  .sub li {
    height: 27px;
    line-height: 27px;
    white-space: nowrap;
  }

  .sub .sub-current {
    color: #fff;
    font-weight: 600;
  }

  .content {
    flex: 1;
    min-width: 0;
    padding: 10px 20px 0 22px;
  }

  h1 {
    margin: 0;
    padding: 8px 0 5px;
    font-size: 23px;
    font-weight: 400;
    line-height: 30px;
    color: #23282d;
  }

  .form-table {
    width: 100%;
    margin-top: 6px;
    border-collapse: collapse;
    table-layout: fixed;
  }

  th {
    width: 221px;
    padding: 20px 0;
    text-align: left;
    vertical-align: top;
    font-size: 14px;
    font-weight: 400;
    letter-spacing: 0.24px;
    -webkit-text-stroke: 0.25px #23282d;
    line-height: 18px;
    color: #23282d;
  }

  td {
    padding: 15px 0;
    vertical-align: top;
    font-size: 14px;
    line-height: 18px;
  }

  .select-wrap {
    position: relative;
    width: 195px;
    height: 27px;
    margin: 1px 0;
  }

  select {
    display: block;
    width: 100%;
    height: 100%;
    box-sizing: border-box;
    appearance: none;
    border: 1px solid #ddd;
    border-radius: 5px;
    background: #fff;
    padding: 1px 8px 0;
    font: inherit;
    font-size: 14px;
    color: #32373c;
  }

  .updown {
    position: absolute;
    right: 6px;
    top: 8px;
    width: 7px;
    height: 11px;
    fill: #333;
  }

  .description {
    margin: 5px 0 0 -1px;
    font-size: 14px;
    font-style: italic;
    line-height: 19px;
    padding: 2px 0 1px;
    color: #666;
  }

  .icon-grid {
    width: 785px;
    margin-left: 1px;
    padding: 2px 0;
    display: grid;
    grid-template-columns: repeat(20, 32px);
    justify-content: space-between;
    row-gap: 4px;
  }

  .tile {
    width: 32px;
    height: 32px;
    box-sizing: border-box;
    display: flex;
    align-items: center;
    justify-content: center;
    background: #f7f7f7;
    border: 1px solid #ccc;
    border-radius: 3px;
    box-shadow: 0 1px 0 #ccc;
    color: #555;
  }

  .tile.active {
    background: #0085ba;
    border-color: #0073aa;
    box-shadow: 0 1px 0 #006799;
    color: #fff;
  }

  .check {
    display: block;
    width: 16px;
    height: 16px;
    box-sizing: border-box;
    margin: 7px 0 4px -1px;
    background: #fff;
    border: 1px solid #b4b9be;
    box-shadow: inset 0 1px 2px rgba(0, 0, 0, 0.1);
  }

  .check svg {
    display: block;
    width: 14px;
    height: 14px;
    fill: #1e8cbe;
  }

  input[type="text"] {
    display: block;
    width: 160px;
    height: 27px;
    box-sizing: border-box;
    margin: 1px 0;
    background: #fff;
    border: 1px solid #ddd;
    box-shadow: inset 0 1px 2px rgba(0, 0, 0, 0.07);
  }
</style>
